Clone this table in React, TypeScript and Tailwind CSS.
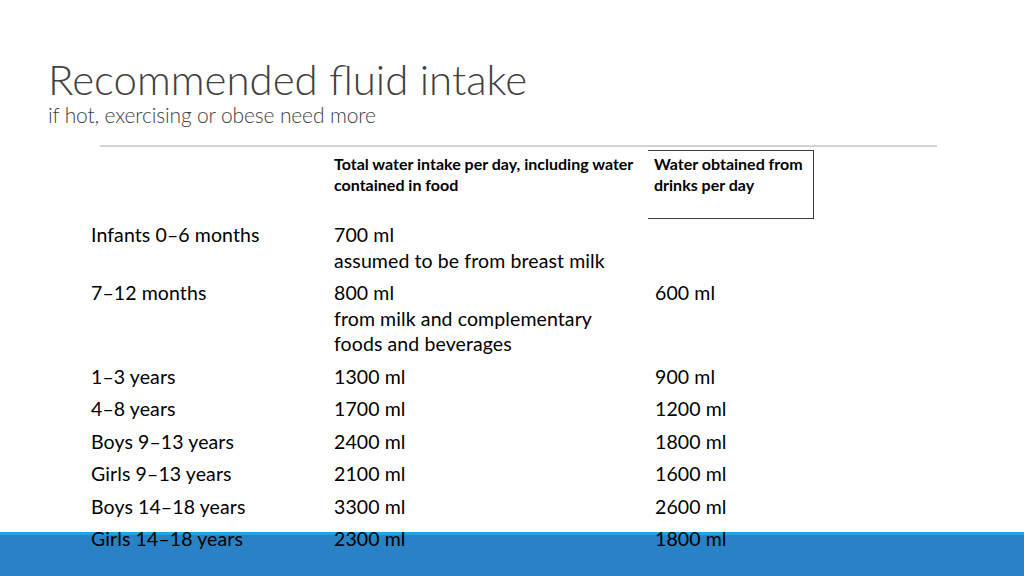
import React from "react";

const rows: { a: string; b: string[]; c: string }[] = [
  { a: "Infants 0–6 months", b: ["700 ml", "assumed to be from breast milk"], c: "" },
  { a: "7–12 months", b: ["800 ml", "from milk and complementary", "foods and beverages"], c: "600 ml" },
  { a: "1–3 years", b: ["1300 ml"], c: "900 ml" },
  { a: "4–8 years", b: ["1700 ml"], c: "1200 ml" },
  { a: "Boys 9–13 years", b: ["2400 ml"], c: "1800 ml" },
  { a: "Girls 9–13 years", b: ["2100 ml"], c: "1600 ml" },
  { a: "Boys 14–18 years", b: ["3300 ml"], c: "2600 ml" },
  { a: "Girls 14–18 years", b: ["2300 ml"], c: "1800 ml" },
];

export default function App() {
  return (
    <div className="relative w-[1024px] h-[576px] overflow-hidden bg-white font-['Lato','Liberation_Sans',sans-serif]">
      <div className="absolute left-0 right-0 bottom-0 h-[44px] bg-[#2a82c6] border-t-[3px] border-[#1fa6e0]" />
      <div className="relative z-10 flex flex-col">
        <div className="pl-[48px] pt-[57px]">
          <h1 className="text-[42px] leading-[45px] font-light text-[#404040]">Recommended fluid intake</h1>
          <p className="text-[21px] leading-[26px] font-light text-[#404040] tracking-[-0.15px]">if hot, exercising or obese need more</p>
        </div>
        <div className="ml-[100px] w-[837px] mt-[17px] h-[2px] bg-[#d4d4d4]" />
        <div className="grid grid-cols-[243px_314px_166px] ml-[91px] mt-[3px] text-black">
          <div />
          <div className="pt-[4px] text-[16px] leading-[20.5px] font-bold">
            Total water intake per day, including water contained in food
          </div>
          <div className="h-[69px] border-t-[1.5px] border-r-[1.5px] border-b-[1.5px] border-[#3a3a3a] pl-[6px] pt-[3px] text-[16px] leading-[20.5px] font-bold">
            Water obtained from drinks per day
          </div>
        </div>
        <div className="flex flex-col gap-[7px] ml-[91px] mt-[3px] text-[19.5px] leading-[25.5px] text-black tracking-[0.1px]">
          {rows.map((r) => (
            <div key={r.a} className="grid grid-cols-[243px_321px_160px]">
              <div>{r.a}</div>
              <div className="flex flex-col">
                {r.b.map((l) => (
                  <span key={l}>{l}</span>
                ))}
              </div>
              <div>{r.c}</div>
            </div>
          ))}
        </div>
      </div>
    </div>
  );
}
